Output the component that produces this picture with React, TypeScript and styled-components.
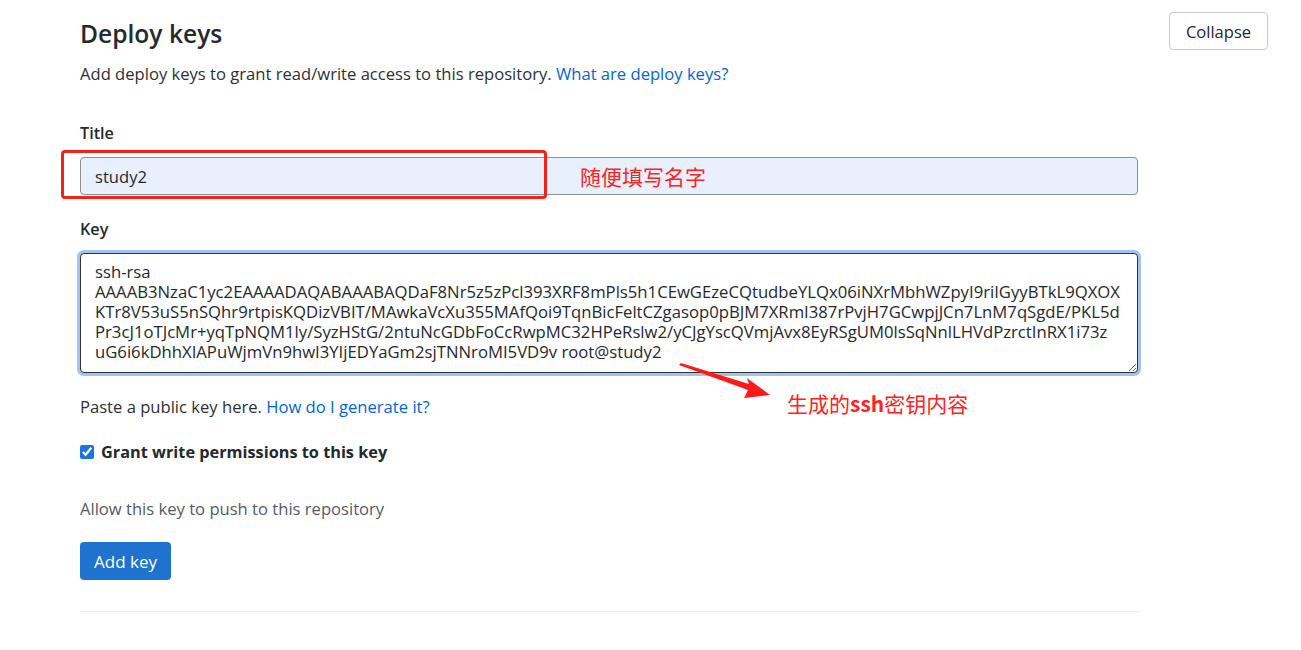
import React from "react";
import styled, { createGlobalStyle } from "styled-components";

const GlobalStyle = createGlobalStyle`
  html, body {
    margin: 0;
    padding: 0;
    background: #fff;
  }
  body {
    font-family: "Open Sans", "Noto Sans", "Liberation Sans", sans-serif;
    color: #24292e;
  }
`;

const KEY_TEXT = [
  "ssh-rsa",
  "AAAAB3NzaC1yc2EAAAADAQABAAABAQDaF8Nr5z5zPcl393XRF8mPls5h1CEwGEzeCQtudbeYLQx06iNXrMbhWZpyI9riIGyyBTkL9QXOX",
  "KTr8V53uS5nSQhr9rtpisKQDizVBIT/MAwkaVcXu355MAfQoi9TqnBicFeltCZgasop0pBJM7XRmI387rPvjH7GCwpjJCn7LnM7qSgdE/PKL5d",
  "Pr3cJ1oTJcMr+yqTpNQM1ly/SyzHStG/2ntuNcGDbFoCcRwpMC32HPeRslw2/yCJgYscQVmjAvx8EyRSgUM0lsSqNnlLHVdPzrctInRX1i73z",
  "uG6i6kDhhXIAPuWjmVn9hwI3YIjEDYaGm2sjTNNroMI5VD9v root@study2",
].join("\n");

export const Page = styled.div`
  display: flex;
  align-items: flex-start;
  padding-left: 80px;
  width: 1301px;
  height: 650px;
  box-sizing: border-box;
  overflow: hidden;
`;

export const Main = styled.div`
  width: 1058px;
  display: flex;
  flex-direction: column;
  align-items: flex-start;
`;

export const HeadLine = styled.h2`
  font-size: 24.6px;
  line-height: 30px;
  font-weight: 600;
  margin: 19px 0 0;
  color: #24292e;
`;

export const Sub = styled.p<{ mt?: number; muted?: boolean }>`
  font-size: 16.6px;
  line-height: 24px;
  margin: ${({ mt }) => (mt ? mt + "px" : 0)} 0 0;
  color: ${({ muted }) => (muted ? "#555b61" : "#2b3036")};
`;

export const Link = styled.a`
  color: #0366d6;
  text-decoration: none;
`;

export const Label = styled.label<{ mt: number }>`
  display: block;
  font-size: 16.2px;
  line-height: 24px;
  font-weight: 600;
  margin-top: ${({ mt }) => mt + "px"};
`;

export const Field = styled.div`
  position: relative;
  width: 100%;
  margin-top: 12px;
`;

export const TextInput = styled.input`
  width: 100%;
  height: 38px;
  box-sizing: border-box;
  padding: 0 14px;
  border: 1px solid #8f8f8f;
  border-radius: 4px;
  background: #e8f0fe;
  font-family: inherit;
  font-size: 16.6px;
  color: #24292e;
  outline: none;
`;

export const KeyArea = styled.textarea`
  display: block;
  width: 100%;
  height: 120px;
  box-sizing: border-box;
  padding: 8px 14px;
  border: 1px solid #333;
  border-radius: 4px;
  box-shadow: 0 0 0 3px #a3c4ea;
  font-family: inherit;
  font-size: 16.7px;
  line-height: 20px;
  color: #24292e;
  white-space: pre;
  overflow: hidden;
  resize: vertical;
  outline: none;
`;

export const RedBox = styled.div`
  position: absolute;
  left: -19px;
  top: -7px;
  width: 486px;
  height: 49px;
  box-sizing: border-box;
  border: 3px solid #f2231b;
  border-radius: 4px;
  pointer-events: none;
`;

export const Note = styled.span<{ x: number; y: number }>`
  position: absolute;
  left: ${({ x }) => x + "px"};
  top: ${({ y }) => y + "px"};
  font-family: "Noto Sans CJK SC", sans-serif;
  font-size: 21px;
  line-height: 24px;
  color: #ff2222;
  white-space: nowrap;
  pointer-events: none;
`;

export const Arrow = styled.svg`
  position: absolute;
  left: 599px;
  top: 110px;
  overflow: visible;
  pointer-events: none;
`;

export const CheckRow = styled.label`
  display: flex;
  align-items: center;
  gap: 7px;
  margin-top: 21px;
  font-size: 16.3px;
  line-height: 24px;
  font-weight: 700;
  color: #24292e;
`;

export const Check = styled.input`
  width: 14px;
  height: 14px;
  margin: 0;
  accent-color: #1a73e8;
`;

export const PrimaryButton = styled.button`
  margin-top: 21px;
  height: 38px;
  padding: 0 14px;
  border: none;
  border-radius: 4px;
  background: #1f73ce;
  color: #fff;
  font-family: inherit;
  font-size: 17px;
`;

export const Divider = styled.hr`
  width: 100%;
  margin: 31px 0 0;
  border: none;
  border-top: 1px solid #e8eaed;
`;

export const GhostButton = styled.button`
  margin: 12px 0 0 31px;
  width: 99px;
  height: 38px;
  border: 1px solid #c8c8c8;
  border-radius: 4px;
  background: #fff;
  color: #24292e;
  font-family: inherit;
  font-size: 16.5px;
`;

const DeployKeys = () => {
  return (
    <Page>
      <GlobalStyle />
      <Main>
        <HeadLine>Deploy keys</HeadLine>
        <Sub mt={13}>
          Add deploy keys to grant read/write access to this repository.{" "}
          <Link href="#">What are deploy keys?</Link>
        </Sub>

        <Label mt={35}>Title</Label>
        <Field>
          <TextInput defaultValue="study2" />
          <RedBox />
          <Note x={500} y={7}>随便填写名字</Note>
        </Field>

        <Label mt={22}>Key</Label>
        <Field>
          <KeyArea defaultValue={KEY_TEXT} spellCheck={false} />
          <Arrow width="100" height="40" viewBox="0 0 100 40">
            <polygon points="0,2 2,0 70,21 68,15 91,32 65,35 69,27" fill="#ff1a1a" />
          </Arrow>
          <Note x={707} y={138}>
            生成的<b>ssh</b>密钥内容
          </Note>
        </Field>

        <Sub mt={22}>
          Paste a public key here. <Link href="#">How do I generate it?</Link>
        </Sub>

        <CheckRow>
          <Check type="checkbox" defaultChecked />
          Grant write permissions to this key
        </CheckRow>

        <Sub mt={33} muted>
          Allow this key to push to this repository
        </Sub>

        <PrimaryButton>Add key</PrimaryButton>
        <Divider />
      </Main>
      <GhostButton>Collapse</GhostButton>
    </Page>
  );
};

export default DeployKeys;
